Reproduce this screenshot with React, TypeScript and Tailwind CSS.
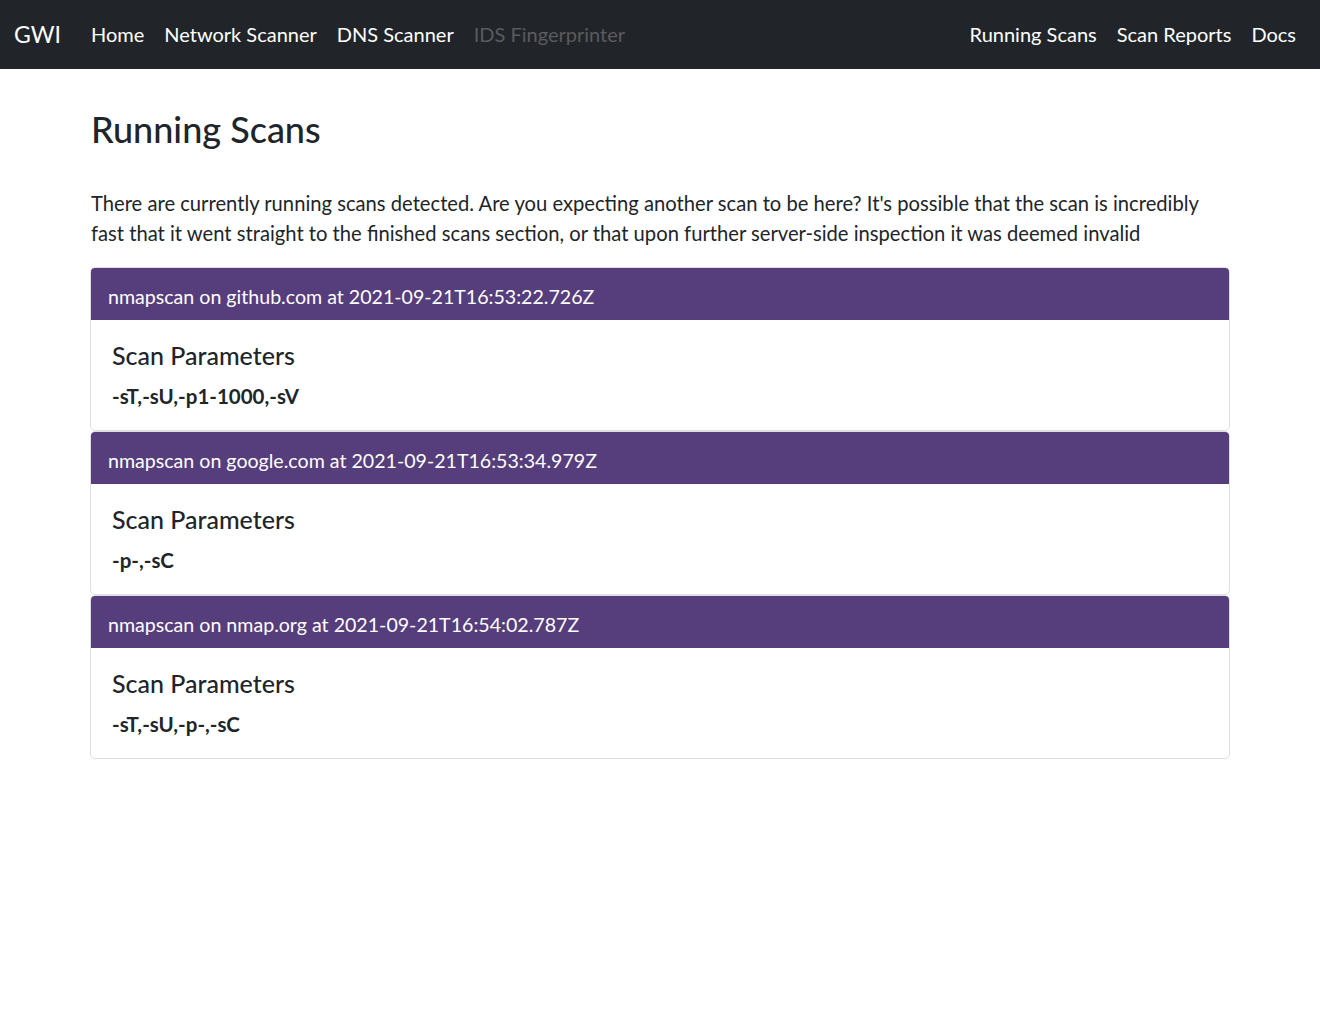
type Scan = {
  target: string
  startedAt: string
  params: string
}

const scans: Scan[] = [
  { target: "github.com", startedAt: "2021-09-21T16:53:22.726Z", params: "-sT,-sU,-p1-1000,-sV" },
  { target: "google.com", startedAt: "2021-09-21T16:53:34.979Z", params: "-p-,-sC" },
  { target: "nmap.org", startedAt: "2021-09-21T16:54:02.787Z", params: "-sT,-sU,-p-,-sC" },
]

const leftLinks = ["Home", "Network Scanner", "DNS Scanner"]
const rightLinks = ["Running Scans", "Scan Reports", "Docs"]

function Navbar() {
  return (
    <nav className="flex h-[69px] items-center bg-[#212529] pr-[14px] pb-[2px] pl-[14px]">
      <a className="mr-[20px] text-[23px] leading-[30px] text-white">GWI</a>
      <ul className="flex items-center">
        {leftLinks.map((l) => (
          <li key={l}>
            <a className="block px-[10px] py-[10px] text-[20px] leading-[30px] text-white">{l}</a>
          </li>
        ))}
        <li>
          <a className="block px-[10px] py-[10px] text-[20px] leading-[30px] text-[#595b5e]">IDS Fingerprinter</a>
        </li>
      </ul>
      <ul className="ml-auto flex items-center">
        {rightLinks.map((l) => (
          <li key={l}>
            <a className="block px-[10px] py-[10px] text-[20px] leading-[30px] text-white">{l}</a>
          </li>
        ))}
      </ul>
    </nav>
  )
}

function ScanCard({ scan }: { scan: Scan }) {
  return (
    <div className="rounded-[5px] border border-[#dfdfdf] bg-white">
      <div className="h-[52px] rounded-t-[4px] bg-[#563d7c] px-[17px] pt-[14px] pb-[8px] text-[19.6px] leading-[30px] text-white">
        nmapscan on {scan.target} at {scan.startedAt}
      </div>
      <div className="px-[21px] pt-[20px] pb-[19px]">
        <h5 className="mb-[10px] text-[25px] leading-[31px] font-medium text-[#212529]">Scan Parameters</h5>
        <b className="block text-[20.5px] leading-[30px] font-bold text-[#212529]">{scan.params}</b>
      </div>
    </div>
  )
}

export default function App() {
  return (
    <div className="min-h-[1026px] bg-white font-['Lato',sans-serif] text-[#212529]">
      <Navbar />
      <main className="mx-auto w-[1140px] pt-[37px]">
        <h2 className="pl-[1px] text-[36px] leading-[46px] font-medium">Running Scans</h2>
        <p className="mt-[36px] mb-[19px] pr-[24px] pl-[1px] text-[20.2px] leading-[30px]">
          There are currently running scans detected. Are you expecting another scan to be here? It's possible that
          the scan is incredibly fast that it went straight to the finished scans section, or that upon further
          server-side inspection it was deemed invalid
        </p>
        <div className="flex flex-col">
          {scans.map((s) => (
            <ScanCard key={s.target} scan={s} />
          ))}
        </div>
      </main>
    </div>
  )
}
